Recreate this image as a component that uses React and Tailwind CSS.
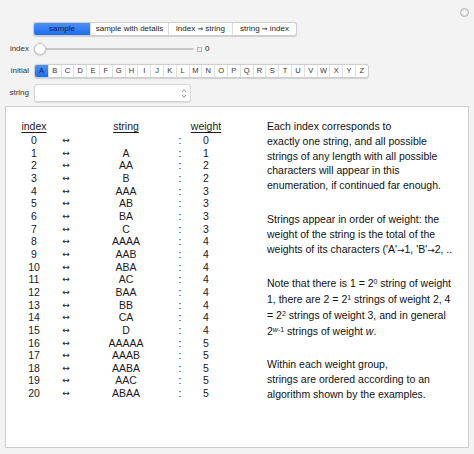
import React from 'react';

const rows = [
  [0, '', 0],
  [1, 'A', 1],
  [2, 'AA', 2],
  [3, 'B', 2],
  [4, 'AAA', 3],
  [5, 'AB', 3],
  [6, 'BA', 3],
  [7, 'C', 3],
  [8, 'AAAA', 4],
  [9, 'AAB', 4],
  [10, 'ABA', 4],
  [11, 'AC', 4],
  [12, 'BAA', 4],
  [13, 'BB', 4],
  [14, 'CA', 4],
  [15, 'D', 4],
  [16, 'AAAAA', 5],
  [17, 'AAAB', 5],
  [18, 'AABA', 5],
  [19, 'AAC', 5],
  [20, 'ABAA', 5],
];

const Arrow = () => <span className="font-['DejaVu_Sans',sans-serif] text-[0.85em]">→</span>;

const tabs = [
  { label: 'sample', w: 'w-[56px]' },
  { label: 'sample with details', w: 'w-[78px]' },
  { label: <>index <Arrow /> string</>, w: 'w-[64px]' },
  { label: <>string <Arrow /> index</>, w: 'w-[64px]' },
];

const letters = 'ABCDEFGHIJKLMNOPQRSTUVWXYZ'.split('');

function Label({ children }) {
  return (
    <div className="w-[25px] ml-[4px] mr-[5px] text-right text-[8px] text-[#333]">
      {children}
    </div>
  );
}

export default function App() {
  return (
    <div className="relative w-[474px] h-[454px] bg-[#f3f3f3] font-['Liberation_Sans',Arial,sans-serif] text-[#111] overflow-hidden">
      {/* plus icon top right */}
      <div className="absolute left-[460px] top-[8px] w-[9px] h-[9px] rounded-full border border-[#b5b5b5] bg-[#e6e6e6] flex items-center justify-center">
        <svg width="7" height="7" viewBox="0 0 7 7">
          <path d="M3.5 1v5M1 3.5h5" stroke="#fff" strokeWidth="1.4" />
        </svg>
      </div>

      {/* tab bar */}
      <div className="flex ml-[33px] pt-[22px] h-[36px]">
        <div className="flex h-[14px] rounded-[3px] border border-[#cfcfcf] bg-white overflow-hidden shadow-[0_0.5px_1px_rgba(0,0,0,0.15)]">
          {tabs.map((t, i) => (
            <div
              key={i}
              className={`${t.w} flex items-center justify-center text-[8px] leading-none whitespace-pre ${
                i === 0
                  ? 'bg-gradient-to-b from-[#4d90f8] to-[#1a6cf0] text-[#0b1e44]'
                  : 'text-[#222] border-l border-[#dcdcdc]'
              }`}
            >
              {t.label}
            </div>
          ))}
        </div>
      </div>

      {/* index slider */}
      <div className="flex items-center mt-[7px] h-[12px]">
        <Label>index</Label>
        <div className="relative w-[160px] h-[12px] flex items-center">
          <div className="w-full h-[2px] rounded-full bg-[#c9c9c9]" />
          <div className="absolute left-0 top-0 w-[12px] h-[12px] rounded-full bg-white border border-[#c4c4c4] shadow-[0_0.5px_1.5px_rgba(0,0,0,0.25)]" />
        </div>
        <div className="ml-[3px] w-[5px] h-[5px] border border-[#b8b8b8] bg-[#eee]" />
        <div className="ml-[3px] text-[8px] text-[#222]">0</div>
      </div>

      {/* initial letter buttons */}
      <div className="flex items-center mt-[9px] h-[14px]">
        <Label>initial</Label>
        <div className="flex h-[14px] rounded-[3px] border border-[#cfcfcf] bg-white overflow-hidden shadow-[0_0.5px_1px_rgba(0,0,0,0.15)]">
          {letters.map((l, i) => (
            <div
              key={l}
              className={`w-[12.8px] flex items-center justify-center text-[7.5px] leading-none ${
                i === 0
                  ? 'bg-gradient-to-b from-[#4d90f8] to-[#1a6cf0] text-[#0b1e44]'
                  : 'text-[#333] border-l border-[#e0e0e0]'
              }`}
            >
              {l}
            </div>
          ))}
        </div>
      </div>

      {/* string dropdown */}
      <div className="flex items-center mt-[6px] h-[18px]">
        <Label>string</Label>
        <div className="w-[157px] h-[18px] rounded-[3px] border border-[#d6d6d6] bg-white flex items-center justify-end pr-[3px] shadow-[0_0.5px_1px_rgba(0,0,0,0.1)]">
          <svg width="6" height="11" viewBox="0 0 6 11">
            <path d="M1 4l2-2.5L5 4M1 7l2 2.5L5 7" fill="none" stroke="#888" strokeWidth="0.9" />
          </svg>
        </div>
      </div>

      {/* output panel */}
      <div className="mt-[4px] ml-[5px] w-[464px] h-[342px] bg-white border border-[#cdcdcd] flex pt-[12px]">
        {/* table */}
        <div className="ml-[8px] w-[212px] text-[10.5px] text-[#1a1a1a]">
          <div className="grid grid-cols-[40px_24px_96px_12px_40px] h-[15px] leading-[15px]">
            <div className="text-center underline underline-offset-2">index</div>
            <div />
            <div className="text-center underline underline-offset-2">string</div>
            <div />
            <div className="text-center underline underline-offset-2">weight</div>
          </div>
          {rows.map(([i, s, w]) => (
            <div
              key={i}
              className="grid grid-cols-[40px_24px_96px_12px_40px] h-[12.67px] leading-[12.67px]"
            >
              <div className="text-center">{i}</div>
              <div className="text-center font-['DejaVu_Sans',sans-serif] text-[9px]">↔</div>
              <div className="text-center">{s}</div>
              <div className="text-center">:</div>
              <div className="text-center">{w}</div>
            </div>
          ))}
        </div>

        {/* description */}
        <div className="ml-[41px] w-[200px] text-[10.5px] text-[#111] overflow-hidden">
          <div className="leading-[14.8px]">
            <div>Each index corresponds to</div>
            <div>exactly one string, and all possible</div>
            <div>strings of any length with all possible</div>
            <div>characters will appear in this</div>
            <div>enumeration, if continued far enough.</div>
          </div>
          <div className="mt-[19px] leading-[15px]">
            <div>Strings appear in order of weight: the</div>
            <div>weight of the string is the total of the</div>
            <div className="whitespace-nowrap">
              weights of its characters ('A'<Arrow />1, 'B'<Arrow />2, ..
            </div>
          </div>
          <div className="mt-[17.5px] leading-[16px]">
            <div className="whitespace-nowrap">
              Note that there is 1 = 2<sup className="text-[7px]">0</sup> string of weight
            </div>
            <div className="whitespace-nowrap">
              1, there are 2 = 2<sup className="text-[7px]">1</sup> strings of weight 2, 4
            </div>
            <div className="whitespace-nowrap">
              = 2<sup className="text-[7px]">2</sup> strings of weight 3, and in general
            </div>
            <div className="whitespace-nowrap">
              2<sup className="text-[7px]"><i>w</i>-1</sup> strings of weight <i>w</i>.
            </div>
          </div>
          <div className="mt-[17.5px] leading-[15px]">
            <div>Within each weight group,</div>
            <div>strings are ordered according to an</div>
            <div>algorithm shown by the examples.</div>
          </div>
        </div>
      </div>
    </div>
  );
}
